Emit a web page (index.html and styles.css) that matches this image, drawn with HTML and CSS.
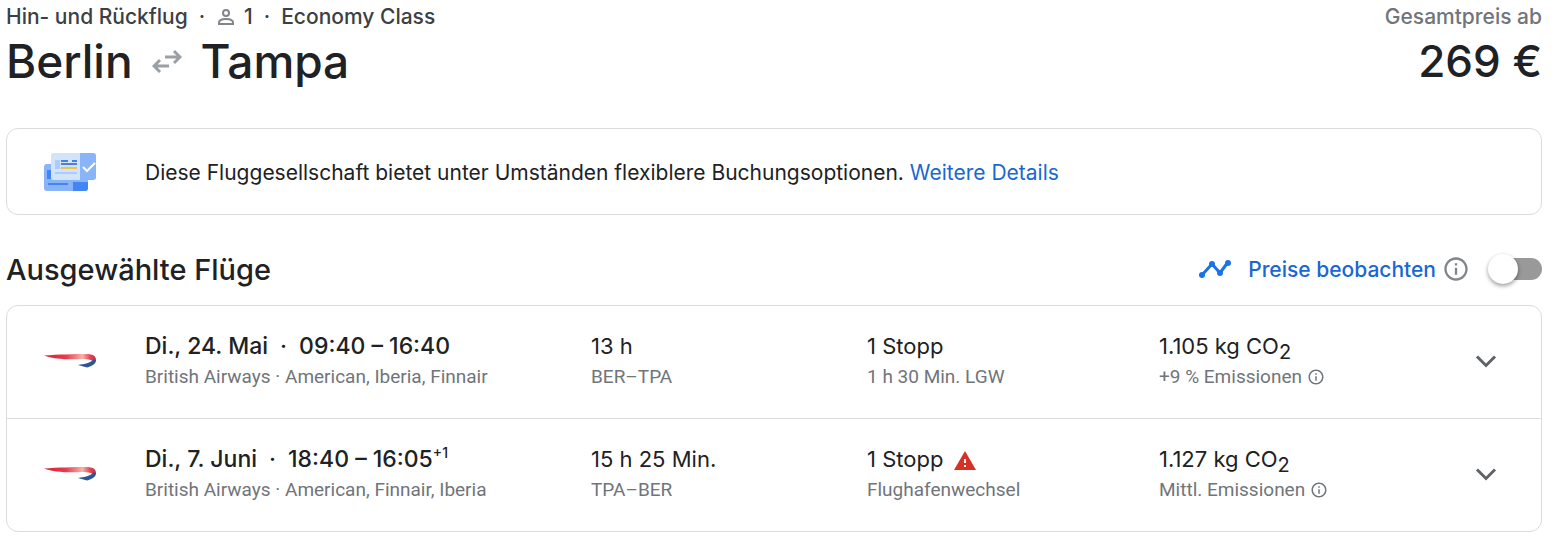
FILE: index.html
```html
<!DOCTYPE html>
<html lang="de">
<head>
  <meta charset="UTF-8">
  <meta name="viewport" content="width=device-width, initial-scale=1.0">
  <title>Berlin – Tampa</title>
  <link rel="stylesheet" href="styles.css">
</head>
<body>
  <!-- Wiederverwendete Symbole -->
  <svg class="sprite" aria-hidden="true">
    <symbol id="icon-info" viewBox="0 0 24 24">
      <path d="M11 7h2v2h-2zm0 4h2v6h-2zm1-9C6.48 2 2 6.48 2 12s4.48 10 10 10 10-4.48 10-10S17.52 2 12 2zm0 18c-4.41 0-8-3.59-8-8s3.59-8 8-8 8 3.59 8 8-3.59 8-8 8z"/>
    </symbol>
    <symbol id="icon-chevron" viewBox="0 0 24 24">
      <path d="M6.700 8.300 12 13.600l5.300-5.300 1.400 1.400L12 16.400 5.300 9.700z"/>
    </symbol>
    <linearGradient id="ribbon-red" x1="0" x2="1">
      <stop offset="0" stop-color="#d81f33"/>
      <stop offset=".42" stop-color="#ea3a4b"/>
      <stop offset=".74" stop-color="#f6b3ac"/>
      <stop offset=".88" stop-color="#ea4655"/>
      <stop offset="1" stop-color="#b9304f"/>
    </linearGradient>
    <symbol id="logo-ba" viewBox="0 0 54 16">
      <path fill="url(#ribbon-red)" d="M0 2.500C14 1.500 30 1 42 1c7 0 10 2 10 6 0 1-1 2-2 2.500C49 7 44 6 38 6 24 7 10 6 0 2.500z"/>
      <path fill="#2f5597" d="M34 12C41 11 46 10 49.500 6.500L52 7c0 4-4 6-9 7.500z"/>
    </symbol>
  </svg>

  <main class="page">
    <header class="trip">
      <div>
        <div class="trip-meta">
          <span>Hin- und Rückflug</span>
          <span>·</span>
          <span class="passengers">
            <svg class="icon-person" viewBox="0 0 16 16" aria-hidden="true">
              <circle cx="8" cy="4" r="3"/>
              <path d="M1 15v-1.500C1 11 5 10 8 10s7 1 7 3.500V15z"/>
            </svg>
            1
          </span>
          <span>·</span>
          <span>Economy Class</span>
        </div>
        <h1 class="route">
          <span>Berlin</span>
          <svg class="icon-swap" viewBox="0 0 30 24" aria-hidden="true">
            <path d="M13 8h15M22 2l6 6-6 6M17 17H2M8 11l-6 6 6 6"/>
          </svg>
          <span>Tampa</span>
        </h1>
      </div>
      <div class="total">
        <div class="total-label">Gesamtpreis ab</div>
        <div class="total-price">269 €</div>
      </div>
    </header>

    <section class="card notice">
      <svg class="notice-icon" viewBox="0 0 52 38" aria-hidden="true">
        <rect y="11" width="44" height="27" rx="3" fill="#8ab4f8"/>
        <path fill="#4285f4" d="M29 29h15v6a3 3 0 0 1-3 3H29zM3 17h4v9H3zM4 30h20v2H4z"/>
        <rect x="7" width="45" height="27" rx="3" fill="#d2e3fc"/>
        <path fill="#8ab4f8" d="M36 0h13a3 3 0 0 1 3 3v21a3 3 0 0 1-3 3H36z"/>
        <path fill="#aecbfa" d="M11 7h5v9h-5zM11 19h22v2H11z"/>
        <path fill="#4b7fd8" d="M17 7h7v2h-7zM28 7h5v2h-5zM17 10h16v2H17z"/>
        <path fill="#f0bf4c" d="M17 14h16v2H17z"/>
        <path fill="none" stroke="#fff" stroke-width="2" d="m39 14 4 4 8-8"/>
      </svg>
      <p>Diese Fluggesellschaft bietet unter Umständen flexiblere Buchungsoptionen. <a href="#">Weitere Details</a></p>
    </section>

    <div class="section-head">
      <h2>Ausgewählte Flüge</h2>
      <div class="track">
        <svg class="icon-trend" viewBox="0 0 34 20" aria-hidden="true">
          <path d="M4 16 14 5l8 9 8-11"/>
          <circle cx="4" cy="16" r="3"/>
          <circle cx="14" cy="5" r="3"/>
          <circle cx="22" cy="14" r="3"/>
          <circle cx="30" cy="4" r="3"/>
        </svg>
        <label for="track-prices">Preise beobachten</label>
        <svg class="icon-info-large" aria-hidden="true"><use href="#icon-info"/></svg>
        <input class="switch" type="checkbox" role="switch" id="track-prices">
      </div>
    </div>

    <section class="card">
      <article class="flight">
        <svg class="airline" aria-hidden="true"><use href="#logo-ba"/></svg>
        <div>
          <div class="primary times"><span>Di., 24. Mai</span><span>·</span><span>09:40 – 16:40</span></div>
          <div class="secondary">British Airways · American, Iberia, Finnair</div>
        </div>
        <div>
          <div class="primary">13 h</div>
          <div class="secondary">BER–TPA</div>
        </div>
        <div>
          <div class="primary">1 Stopp</div>
          <div class="secondary">1 h 30 Min. LGW</div>
        </div>
        <div>
          <div class="primary">1.105 kg CO<sub>2</sub></div>
          <div class="secondary">+9 % Emissionen <svg class="icon-info-small" aria-hidden="true"><use href="#icon-info"/></svg></div>
        </div>
        <button class="expand" type="button" aria-label="Flugdetails anzeigen">
          <svg aria-hidden="true"><use href="#icon-chevron"/></svg>
        </button>
      </article>

      <article class="flight">
        <svg class="airline" aria-hidden="true"><use href="#logo-ba"/></svg>
        <div>
          <div class="primary times"><span>Di., 7. Juni</span><span>·</span><span>18:40 – 16:05<sup>+1</sup></span></div>
          <div class="secondary">British Airways · American, Finnair, Iberia</div>
        </div>
        <div>
          <div class="primary">15 h 25 Min.</div>
          <div class="secondary">TPA–BER</div>
        </div>
        <div>
          <div class="primary">1 Stopp
            <svg class="icon-warning" viewBox="0 0 22 19" aria-hidden="true">
              <path fill="#d93025" d="M11 0 22 19H0z"/>
              <path fill="#fff" d="M10 8h2v4h-2zM10 14h2v2h-2z"/>
            </svg>
          </div>
          <div class="secondary">Flughafenwechsel</div>
        </div>
        <div>
          <div class="primary">1.127 kg CO<sub>2</sub></div>
          <div class="secondary">Mittl. Emissionen <svg class="icon-info-small" aria-hidden="true"><use href="#icon-info"/></svg></div>
        </div>
        <button class="expand" type="button" aria-label="Flugdetails anzeigen">
          <svg aria-hidden="true"><use href="#icon-chevron"/></svg>
        </button>
      </article>
    </section>
  </main>
</body>
</html>
```
FILE: styles.css
```css
* {
  box-sizing: border-box;
}
body {
  margin: 0;
  background-color: #fff;
  color: #202124;
  font-family: Inter, Roboto, sans-serif;
}
h1, h2, p {
  margin: 0;
  font-weight: 500;
}
a {
  color: #1967d2;
  text-decoration: none;
}
.sprite {
  position: absolute;
  width: 0;
  height: 0;
}
.page {
  padding: 4px 14px 14px 6px;
}

/* Kopfbereich */
.trip {
  display: flex;
  justify-content: space-between;
  margin-bottom: 36px;
}
.trip-meta {
  display: flex;
  gap: 11px;
  color: #3c4043;
  font-size: 21px;
  font-weight: 500;
  line-height: 26px;
}
.passengers {
  display: flex;
  align-items: center;
  gap: 10px;
}
.icon-person {
  width: 16px;
  height: 16px;
  margin-left: 2px;
  fill: none;
  stroke: #80868b;
  stroke-width: 2;
}
.route {
  display: flex;
  align-items: center;
  gap: 19px;
  font-size: 46px;
  line-height: 62px;
}
.icon-swap {
  width: 30px;
  height: 24px;
  fill: none;
  stroke: #9aa0a6;
  stroke-width: 3;
}
.total {
  text-align: right;
}
.total-label {
  color: #70757a;
  font-size: 21px;
  font-weight: 500;
  line-height: 26px;
}
.total-price {
  font-size: 44px;
  font-weight: 500;
  line-height: 62px;
}

.card {
  border: 1px solid #dadce0;
  border-radius: 12px;
}
.notice {
  display: flex;
  align-items: center;
  gap: 49px;
  padding: 24px 37px 23px;
}
.notice-icon {
  flex: none;
  width: 52px;
  height: 38px;
}
.notice p {
  font-size: 21px;
  font-weight: 400;
  line-height: 37px;
}

/* Überschrift und Preisbeobachtung */
.section-head {
  display: flex;
  align-items: center;
  justify-content: space-between;
  height: 90px;
  padding-top: 18px;
}
h2 {
  font-size: 29px;
}
.track {
  display: flex;
  align-items: center;
  color: #1967d2;
  font-size: 21px;
  font-weight: 500;
}
.icon-trend {
  width: 34px;
  height: 20px;
  margin-right: 16px;
  fill: #1a73e8;
}
.icon-trend path {
  fill: none;
  stroke: #1a73e8;
  stroke-width: 3;
}
.icon-info-large {
  width: 28px;
  height: 28px;
  margin: 0 18px 0 6px;
  fill: #80868b;
}
.switch {
  position: relative;
  appearance: none;
  width: 54px;
  height: 30px;
  margin: 0;
  cursor: pointer;
}
.switch::before {
  content: "";
  position: absolute;
  inset: 4px 0 4px 8px;
  border-radius: 12px;
  background: #999;
}
.switch::after {
  content: "";
  position: absolute;
  top: 0;
  left: 0;
  width: 30px;
  height: 30px;
  border-radius: 50%;
  background: #fff;
  box-shadow: 0 2px 4px rgba(0, 0, 0, 0.4);
}
.switch:checked::before {
  background: #8ab4f8;
}
.switch:checked::after {
  left: 24px;
  background: #1a73e8;
}

/* Flüge */
.flight {
  display: grid;
  grid-template-columns: 101px 446fr 276fr 292fr 303fr 48px;
  align-items: center;
  min-height: 112px;
  padding: 24px 31px 26px 37px;
}
.flight + .flight {
  border-top: 1px solid #dadce0;
}
.airline {
  width: 54px;
  height: 16px;
}
.primary {
  font-size: 22px;
  line-height: 32px;
  white-space: nowrap;
}
.times {
  display: flex;
  gap: 12px;
  font-size: 23px;
  font-weight: 500;
}
.primary sub, .primary sup {
  line-height: 0;
}
.primary sub {
  font-size: 20px;
}
.primary sup {
  font-size: 14px;
}
.secondary {
  color: #70757a;
  font-family: Roboto, sans-serif;
  font-size: 19px;
  line-height: 30px;
  white-space: nowrap;
}
.icon-info-small {
  width: 18px;
  height: 18px;
  vertical-align: -3px;
  fill: #70757a;
}
.icon-warning {
  width: 22px;
  height: 19px;
  margin-left: 4px;
  vertical-align: -3px;
}
.expand {
  display: flex;
  align-items: center;
  justify-content: center;
  width: 48px;
  height: 48px;
  padding: 0;
  border: 0;
  border-radius: 50%;
  background: none;
  cursor: pointer;
}
.expand svg {
  width: 36px;
  height: 36px;
  fill: #5f6368;
}
```
